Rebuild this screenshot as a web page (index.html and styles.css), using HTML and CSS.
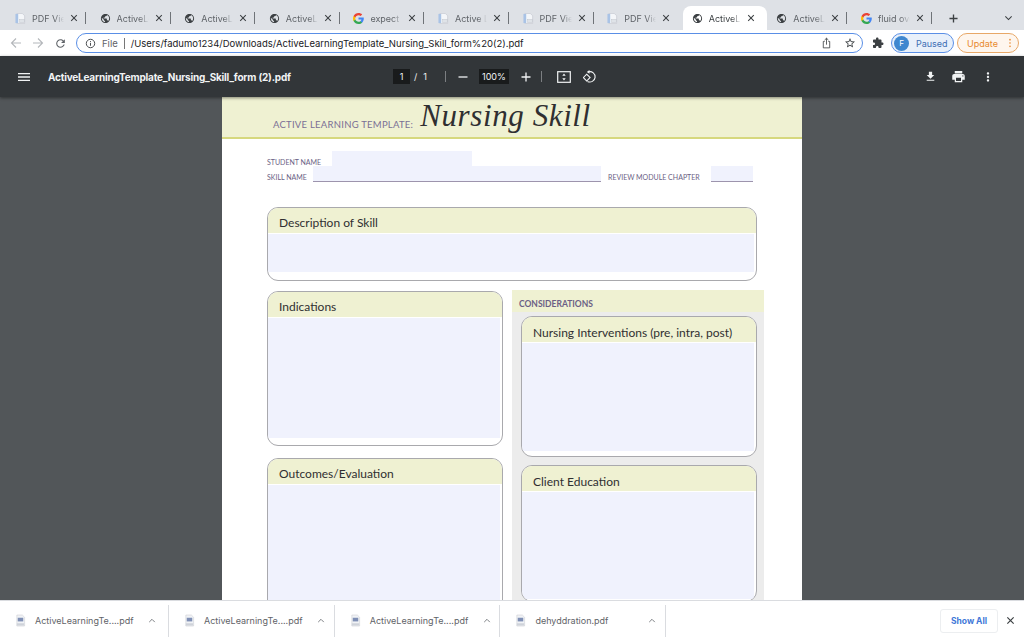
FILE: index.html
```html
<!DOCTYPE html>
<html lang="en">
<head>
<meta charset="utf-8">
<title>ActiveLearningTemplate_Nursing_Skill_form (2).pdf</title>
<link rel="stylesheet" href="styles.css">
</head>
<body>
<svg class="defs" aria-hidden="true">
  <symbol id="i-pdf" viewBox="0 0 12 12"><path d="M2 .5h6l2.500 2.500v8.500H2z" fill="#f4f6f9" stroke="#c3c7cf" stroke-width=".7"/><rect x=".5" y="1" width="3" height="10" fill="#a9c3e6"/><rect x="5" y="7" width="5" height="3.500" fill="#dfe3e8" stroke="#b6bac2" stroke-width=".4"/></symbol>
  <symbol id="i-globe" viewBox="0 0 24 24"><path fill="#3c4043" d="M12 2C6.480 2 2 6.480 2 12s4.480 10 10 10 10-4.480 10-10S17.520 2 12 2zm-1 17.930c-3.950-.490-7-3.850-7-7.930 0-.620.080-1.210.210-1.790L9 15v1c0 1.100.900 2 2 2v1.930zm6.900-2.540c-.260-.810-1-1.390-1.900-1.390h-1v-3c0-.550-.450-1-1-1H8v-2h2c.550 0 1-.450 1-1V7h2c1.100 0 2-.900 2-2v-.410c2.930 1.190 5 4.060 5 7.410 0 2.080-.800 3.970-2.100 5.390z"/></symbol>
  <symbol id="i-g" viewBox="0 0 18 18"><path fill="#4285F4" d="M17.640 9.200c0-.640-.060-1.250-.160-1.840H9v3.480h4.840a4.140 4.140 0 0 1-1.800 2.720v2.260h2.920c1.700-1.570 2.680-3.880 2.680-6.620z"/><path fill="#34A853" d="M9 18c2.430 0 4.470-.800 5.960-2.180l-2.920-2.260c-.800.540-1.830.860-3.040.860-2.340 0-4.320-1.580-5.030-3.700H.960v2.330A9 9 0 0 0 9 18z"/><path fill="#FBBC05" d="M3.970 10.720A5.400 5.400 0 0 1 3.680 9c0-.600.100-1.180.290-1.720V4.950H.960A9 9 0 0 0 0 9c0 1.450.350 2.830.960 4.050l3.010-2.330z"/><path fill="#EA4335" d="M9 3.580c1.320 0 2.500.450 3.440 1.350l2.580-2.580C13.460.890 11.430 0 9 0A9 9 0 0 0 .960 4.950l3.010 2.330C4.680 5.160 6.660 3.580 9 3.580z"/></symbol>
  <symbol id="i-x" viewBox="0 0 10 10"><path d="M1.500 1.500l7 7m0-7l-7 7" fill="none" stroke="#3c4043" stroke-width="1.300"/></symbol>
  <symbol id="i-file" viewBox="0 0 12 14"><path d="M2 1h6l2.500 2.500V13H2z" fill="#f1f3f6" stroke="#c9ccd2" stroke-width=".6"/><rect x="3" y="4" width="6" height="4" fill="#7f8fb5"/><rect x="2" y="10" width="8" height="2.500" fill="#cfd3da"/></symbol>
  <symbol id="i-up" viewBox="0 0 10 6"><path d="M1.500 5L5 1.500 8.500 5" fill="none" stroke="#5f6368" stroke-width="1"/></symbol>
</svg>

<header class="tabstrip">
  <div class="tab"><svg class="fav"><use href="#i-pdf"/></svg><span class="tab-title">PDF Viewer</span><svg class="tab-x"><use href="#i-x"/></svg><i class="tab-sep"></i></div>
  <div class="tab"><svg class="fav"><use href="#i-globe"/></svg><span class="tab-title">ActiveLearning</span><svg class="tab-x"><use href="#i-x"/></svg><i class="tab-sep"></i></div>
  <div class="tab"><svg class="fav"><use href="#i-globe"/></svg><span class="tab-title">ActiveLearning</span><svg class="tab-x"><use href="#i-x"/></svg><i class="tab-sep"></i></div>
  <div class="tab"><svg class="fav"><use href="#i-globe"/></svg><span class="tab-title">ActiveLearning</span><svg class="tab-x"><use href="#i-x"/></svg><i class="tab-sep"></i></div>
  <div class="tab"><svg class="fav"><use href="#i-g"/></svg><span class="tab-title">expect findings</span><svg class="tab-x"><use href="#i-x"/></svg><i class="tab-sep"></i></div>
  <div class="tab"><svg class="fav"><use href="#i-pdf"/></svg><span class="tab-title">Active Learning</span><svg class="tab-x"><use href="#i-x"/></svg><i class="tab-sep"></i></div>
  <div class="tab"><svg class="fav"><use href="#i-pdf"/></svg><span class="tab-title">PDF Viewer</span><svg class="tab-x"><use href="#i-x"/></svg><i class="tab-sep"></i></div>
  <div class="tab"><svg class="fav"><use href="#i-pdf"/></svg><span class="tab-title">PDF Viewer</span><svg class="tab-x"><use href="#i-x"/></svg></div>
  <div class="tab tab-active"><svg class="fav"><use href="#i-globe"/></svg><span class="tab-title">ActiveLearning</span><svg class="tab-x"><use href="#i-x"/></svg></div>
  <div class="tab"><svg class="fav"><use href="#i-globe"/></svg><span class="tab-title">ActiveLearning</span><svg class="tab-x"><use href="#i-x"/></svg><i class="tab-sep"></i></div>
  <div class="tab"><svg class="fav"><use href="#i-g"/></svg><span class="tab-title">fluid overload</span><svg class="tab-x"><use href="#i-x"/></svg><i class="tab-sep"></i></div>
  <svg class="newtab" viewBox="0 0 10 10"><path d="M5 .5v9M.5 5h9" stroke="#3c4043" stroke-width="1.500" fill="none"/></svg>
  <svg class="tabmenu" viewBox="0 0 10 6"><path d="M1.500 1.200L5 4.700l3.500-3.500" stroke="#3c4043" stroke-width="1.200" fill="none"/></svg>
</header>

<nav class="toolbar">
  <svg class="nav-btn nav-back" viewBox="0 0 12 12"><path d="M11 6H1.500M6 1.500L1.500 6 6 10.500" fill="none" stroke="#b4b7bb" stroke-width="1.100"/></svg>
  <svg class="nav-btn nav-fwd" viewBox="0 0 12 12"><path d="M1 6h9.500M6 1.500L10.500 6 6 10.500" fill="none" stroke="#b4b7bb" stroke-width="1.100"/></svg>
  <svg class="nav-btn nav-reload" viewBox="0 0 24 24"><path fill="#5f6368" d="M17.650 6.350C16.200 4.900 14.210 4 12 4c-4.420 0-7.990 3.580-7.990 8s3.570 8 7.990 8c3.730 0 6.840-2.550 7.730-6h-2.080c-.820 2.330-3.040 4-5.650 4-3.310 0-6-2.690-6-6s2.690-6 6-6c1.660 0 3.140.690 4.220 1.780L13 11h7V4l-2.350 2.350z"/></svg>
  <div class="omnibox">
    <svg class="omni-info" viewBox="0 0 12 12"><circle cx="6" cy="6" r="4.600" fill="none" stroke="#3c4043" stroke-width="1"/><path d="M6 5.300v3.200M6 3.400v1" stroke="#3c4043" stroke-width="1"/></svg>
    <span class="omni-file">File</span>
    <i class="omni-sep"></i>
    <span class="omni-url">/Users/fadumo1234/Downloads/ActiveLearningTemplate_Nursing_Skill_form%20(2).pdf</span>
    <svg class="omni-share" viewBox="0 0 12 12"><path d="M4 4.300H2.500v7h7v-7H8M6 7.800V.8M3.900 2.800L6 .8l2.100 2" fill="none" stroke="#3c4043" stroke-width=".9"/></svg>
    <svg class="omni-star" viewBox="0 0 24 24"><path fill="#3c4043" d="M22 9.240l-7.190-.620L12 2 9.190 8.630 2 9.240l5.460 4.730L5.820 21 12 17.270 18.180 21l-1.630-7.030L22 9.240zM12 15.400l-3.760 2.270 1-4.280-3.320-2.880 4.380-.380L12 6.100l1.710 4.040 4.380.380-3.320 2.880 1 4.280L12 15.400z"/></svg>
  </div>
  <svg class="ext" viewBox="0 0 24 24"><path fill="#3c4043" d="M20.500 11H19V7c0-1.100-.900-2-2-2h-4V3.500C13 2.120 11.880 1 10.500 1S8 2.120 8 3.500V5H4c-1.100 0-1.990.900-1.990 2v3.800H3.500c1.490 0 2.700 1.210 2.700 2.700s-1.210 2.700-2.700 2.700H2V20c0 1.100.900 2 2 2h3.800v-1.500c0-1.490 1.210-2.700 2.700-2.700 1.490 0 2.700 1.210 2.700 2.700V22H17c1.100 0 2-.900 2-2v-4h1.500c1.380 0 2.500-1.120 2.500-2.500S21.880 11 20.500 11z"/></svg>
  <div class="profile"><span class="avatar">F</span><span>Paused</span></div>
  <div class="update"><span>Update</span><svg class="update-dots" viewBox="0 0 4 12"><circle cx="2" cy="2" r="1" fill="#e8892f"/><circle cx="2" cy="6" r="1" fill="#e8892f"/><circle cx="2" cy="10" r="1" fill="#e8892f"/></svg></div>
</nav>

<section class="pdfbar">
  <svg class="pdf-menu" viewBox="0 0 24 24"><path fill="#f1f3f4" d="M3 18h18v-2H3v2zm0-5h18v-2H3v2zm0-7v2h18V6H3z"/></svg>
  <span class="pdf-title">ActiveLearningTemplate_Nursing_Skill_form (2).pdf</span>
  <span class="pdf-box pdf-page">1</span>
  <span class="pdf-count">/</span>
  <span class="pdf-total">1</span>
  <i class="pdf-sep pdf-sep1"></i>
  <svg class="pdf-minus" viewBox="0 0 10 10"><path d="M.500 5h9" stroke="#f1f3f4" stroke-width="1.300"/></svg>
  <span class="pdf-box pdf-zoom">100%</span>
  <svg class="pdf-plus" viewBox="0 0 10 10"><path d="M.500 5h9M5 .5v9" stroke="#f1f3f4" stroke-width="1.300"/></svg>
  <i class="pdf-sep pdf-sep2"></i>
  <svg class="pdf-fit" viewBox="0 0 14 12"><rect x=".7" y=".7" width="12.600" height="10.600" fill="none" stroke="#f1f3f4" stroke-width="1.200"/><path d="M7 2.500L5.300 4.700h3.400zM7 9.500L5.300 7.300h3.400z" fill="#f1f3f4"/></svg>
  <svg class="pdf-rotate" viewBox="0 0 14 14"><path d="M5.500 1.800a5.200 5.200 0 1 1-1 9.600" fill="none" stroke="#f1f3f4" stroke-width="1.100"/><path d="M6.500 0v3.800L3.800 1.900z" fill="#f1f3f4"/><rect x="1.300" y="5.200" width="4.800" height="4.800" transform="rotate(45 3.700 7.600)" fill="none" stroke="#f1f3f4" stroke-width="1.100"/></svg>
  <svg class="pdf-download" viewBox="0 0 24 24"><path fill="#f1f3f4" d="M19 9h-4V3H9v6H5l7 7 7-7zM5 18v2h14v-2H5z"/></svg>
  <svg class="pdf-print" viewBox="0 0 24 24"><path fill="#f1f3f4" d="M19 8H5c-1.660 0-3 1.340-3 3v6h4v4h12v-4h4v-6c0-1.660-1.340-3-3-3zm-3 11H8v-5h8v5zm3-7c-.550 0-1-.450-1-1s.450-1 1-1 1 .450 1 1-.450 1-1 1zm-1-9H6v4h12V3z"/></svg>
  <svg class="pdf-more" viewBox="0 0 24 24"><path fill="#f1f3f4" d="M12 8c1.100 0 2-.900 2-2s-.900-2-2-2-2 .900-2 2 .900 2 2 2zm0 2c-1.100 0-2 .900-2 2s.900 2 2 2 2-.900 2-2-.900-2-2-2zm0 6c-1.100 0-2 .900-2 2s.900 2 2 2 2-.900 2-2-.900-2-2-2z"/></svg>
</section>

<main class="viewer">
  <article class="page">
    <div class="page-head">
      <span class="page-kicker">ACTIVE LEARNING TEMPLATE:</span>
      <span class="page-heading">Nursing Skill</span>
    </div>
    <div class="page-body">
      <div class="row row-student">
        <span class="label label-student">STUDENT NAME</span>
        <span class="field field-student"></span>
      </div>
      <div class="row row-skill">
        <span class="label label-skill">SKILL NAME</span>
        <span class="field field-skill"></span>
        <span class="label label-review">REVIEW MODULE CHAPTER</span>
        <span class="field field-chapter"></span>
      </div>
      <div class="card card-desc">
        <h2 class="card-head">Description of Skill</h2>
        <div class="card-fill"></div>
      </div>
      <div class="columns">
        <div class="col-left">
          <div class="card card-ind">
            <h2 class="card-head">Indications</h2>
            <div class="card-fill"></div>
          </div>
          <div class="card card-out">
            <h2 class="card-head">Outcomes/Evaluation</h2>
            <div class="card-fill"></div>
          </div>
        </div>
        <div class="panel">
          <h3 class="panel-head">CONSIDERATIONS</h3>
          <div class="panel-body">
            <div class="card card-nurse">
              <h2 class="card-head card-head-r">Nursing Interventions (pre, intra, post)</h2>
              <div class="card-fill"></div>
            </div>
            <div class="card card-client">
              <h2 class="card-head card-head-r">Client Education</h2>
              <div class="card-fill"></div>
            </div>
          </div>
        </div>
      </div>
    </div>
  </article>
</main>

<footer class="downloads">
  <div class="dl"><svg class="dl-icon"><use href="#i-file"/></svg><span class="dl-name">ActiveLearningTe....pdf</span><svg class="dl-up"><use href="#i-up"/></svg></div>
  <div class="dl"><svg class="dl-icon"><use href="#i-file"/></svg><span class="dl-name">ActiveLearningTe....pdf</span><svg class="dl-up"><use href="#i-up"/></svg></div>
  <div class="dl"><svg class="dl-icon"><use href="#i-file"/></svg><span class="dl-name">ActiveLearningTe....pdf</span><svg class="dl-up"><use href="#i-up"/></svg></div>
  <div class="dl"><svg class="dl-icon"><use href="#i-file"/></svg><span class="dl-name">dehyddration.pdf</span><svg class="dl-up"><use href="#i-up"/></svg></div>
  <span class="showall">Show All</span>
  <svg class="dl-close"><use href="#i-x"/></svg>
</footer>
</body>
</html>
```
FILE: styles.css
```css
* { box-sizing: border-box; }
html, body { margin: 0; height: 100%; overflow: hidden; }
body {
  width: 1024px; height: 640px; display: flex; flex-direction: column;
  font-family: "Liberation Sans", Arial, sans-serif; background: #525659;
}
.defs { width: 0; height: 0; position: absolute; }

/* tab strip */
.tabstrip { flex: 0 0 30px; height: 30px; background: #dee1e6; display: flex; align-items: flex-end; padding-left: 6px; }
.tab { flex: 0 0 84.6px; width: 84.6px; height: 24px; display: flex; align-items: center; padding-left: 9px; }
.tab-active { background: #fff; border-radius: 8px 8px 0 0; }
.fav { width: 11px; height: 11px; flex: none; }
.tab-title {
  width: 32px; margin-left: 6px; font: 9px "Inter", "Liberation Sans", sans-serif; color: #5f6368; white-space: nowrap; overflow: hidden;
  -webkit-mask-image: linear-gradient(90deg, #000 70%, transparent);
  mask-image: linear-gradient(90deg, #000 70%, transparent);
}
.tab-active .tab-title { color: #3c4043; }
.tab-x { width: 8px; height: 8px; margin-left: 6px; flex: none; }
.tab-sep { width: 1px; height: 12px; background: #6f7378; margin-left: 7px; flex: none; }
.newtab { width: 9px; height: 9px; margin: 0 0 7px 12px; }
.tabmenu { width: 9px; height: 6px; margin: 0 0 9px 46px; }

/* address row */
.toolbar { flex: 0 0 26px; height: 26px; background: #fff; display: flex; align-items: center; }
.nav-btn { flex: none; }
.nav-back { width: 12px; height: 12px; margin-left: 10px; }
.nav-fwd { width: 12px; height: 12px; margin-left: 10px; }
.nav-reload { width: 13px; height: 13px; margin-left: 10px; }
.omnibox {
  width: 787px; height: 20px; margin-left: 9px; border: 1.500px solid #5a8fe6; border-radius: 10px;
  display: flex; align-items: center; padding-left: 8px; background: #fff; flex: none;
}
.omni-info { width: 11px; height: 11px; flex: none; }
.omni-file { margin-left: 6px; font: 9.500px "Inter", "Liberation Sans", sans-serif; color: #5f6368; }
.omni-sep { width: 1px; height: 11px; background: #777; margin-left: 6px; }
.omni-url { margin-left: 6px; font: 9.500px "Inter", "Liberation Sans", sans-serif; color: #202124; white-space: nowrap; }
.omni-share { width: 11px; height: 12px; margin-left: auto; }
.omni-star { width: 12px; height: 12px; margin: 0 6px 0 12px; }
.ext { width: 12px; height: 12px; margin-left: 9px; flex: none; }
.profile {
  width: 63px; height: 20px; margin-left: 7px; border: 1px solid #5a8fe6; border-radius: 10px; background: #e8f0fa; flex: none;
  display: flex; align-items: center; padding-left: 2px; gap: 7px; font: 9px "Inter", "Liberation Sans", sans-serif; color: #3c6fb4;
}
.avatar { width: 15px; height: 15px; border-radius: 50%; background: #3f87cf; color: #fff; font-size: 8px; display: flex; align-items: center; justify-content: center; }
.update {
  width: 62px; height: 20px; margin-left: 3px; border: 1px solid #e8a868; border-radius: 10px; background: #fef6ee; flex: none;
  display: flex; align-items: center; padding-left: 9px; font: 9px "Inter", "Liberation Sans", sans-serif; color: #e8892f;
}
.update-dots { width: 4px; height: 10px; margin-left: 10px; }

/* pdf toolbar */
.pdfbar { flex: 0 0 41px; height: 41px; background: #323639; display: flex; align-items: center; position: relative; box-shadow: 0 1px 3px rgba(0,0,0,.45); z-index: 1; color: #f1f3f4; }
.pdf-menu { width: 16px; height: 16px; margin-left: 16px; flex: none; }
.pdf-title { margin-left: 16px; width: 345px; flex: none; font: bold 10px "Inter", "Liberation Sans", sans-serif; letter-spacing: -.2px; white-space: nowrap; }
.pdf-box { background: #191b1c; height: 15px; display: flex; align-items: center; justify-content: center; font: 9px "Inter", "Liberation Sans", sans-serif; flex: none; }
.pdf-page { width: 17px; }
.pdf-count { margin-left: 4px; font: 9px "Inter", "Liberation Sans", sans-serif; }
.pdf-total { margin-left: 6px; font: 9px "Inter", "Liberation Sans", sans-serif; }
.pdf-sep { width: 1px; height: 11px; background: #7c7f82; flex: none; }
.pdf-sep1 { margin-left: 18px; }
.pdf-minus { width: 10px; height: 10px; margin-left: 12px; flex: none; }
.pdf-zoom { width: 30px; margin-left: 11px; }
.pdf-plus { width: 10px; height: 10px; margin-left: 12px; flex: none; }
.pdf-sep2 { margin-left: 10px; }
.pdf-fit { width: 14px; height: 12px; margin-left: 15px; flex: none; }
.pdf-rotate { width: 14px; height: 14px; margin-left: 12px; flex: none; }
.pdf-download { width: 13px; height: 13px; margin-left: 327px; flex: none; }
.pdf-print { width: 15px; height: 15px; margin-left: 14px; flex: none; }
.pdf-more { width: 14px; height: 14px; margin-left: 15px; flex: none; }

/* viewer */
.viewer { flex: 1 1 auto; min-height: 0; overflow: hidden; background: #525659; }
.page { width: 580px; margin: 0 auto; background: #fff; height: 100%; overflow: hidden; }
.page-head { height: 42px; background: #eff1d2; border-bottom: 2px solid #d6d87e; display: flex; align-items: flex-end; padding: 0 0 3px 51px; }
.page-kicker { font: 9.500px "Lato", "Liberation Sans", sans-serif; color: #7a6f95; letter-spacing: .25px; margin-bottom: 4px; }
.page-heading { margin-left: 7px; font: italic 31px/36px "Liberation Serif", serif; color: #2f2f31; letter-spacing: .6px; }
.page-body { padding: 12px 0 0 45px; }

.row { display: flex; height: 16px; }
.row-skill { margin-top: -1px; }
.label { font: 7px/22px "Lato", "Liberation Sans", sans-serif; color: #6b5f85; white-space: nowrap; flex: none; }
.label-student { width: 65px; }
.label-skill { width: 46px; }
.label-review { width: 103px; margin-left: 7px; }
.field { background: #f0f2fd; border-bottom: 1px solid #9d94ad; flex: none; }
.field-student { width: 140px; border-bottom-color: #dcdcec; }
.field-skill { width: 288px; }
.field-chapter { width: 42px; }

/* cards */
.card { border: 1px solid #a9a9ad; border-radius: 11px; overflow: hidden; background: #fff; }
.card-head { margin: 0; height: 25px; padding: 7px 0 0 11px; background: #eff1d2; font: 12px/16px "Lato", "Liberation Sans", sans-serif; color: #2f2f31; font-weight: 400; }
.card-head-r { padding-top: 8px; padding-left: 11px; }
.card-fill { margin: 1px 2px 0 0; background: #f0f2fd; }
.card-desc { width: 490px; height: 74px; margin-top: 25px; }
.card-desc .card-fill { height: 38px; }
.columns { display: grid; grid-template-columns: 236px 252px; column-gap: 9px; margin-top: 9px; }
.col-left { padding-top: 1px; display: flex; flex-direction: column; gap: 12px; }
.card-ind { height: 155px; }
.card-ind .card-fill { height: 120px; }
.card-out { height: 180px; }
.card-out .card-fill { height: 140px; }
.panel { background: #ececec; height: 320px; }
.panel-head { margin: 0; height: 22px; padding-left: 7px; background: #eff1d2; font: bold 8.500px/28px "Lato", "Liberation Sans", sans-serif; color: #6b5f85; }
.panel-body { padding: 4px 7px 0 9px; display: flex; flex-direction: column; gap: 8px; }
.card-nurse { height: 141px; }
.card-nurse .card-fill { height: 108px; }
.card-client { height: 137px; }
.card-client .card-fill { height: 107px; }

/* download bar */
.downloads { flex: 0 0 40px; height: 40px; background: #fff; border-top: 1px solid #dadce0; display: flex; align-items: center; }
.dl { width: 165.700px; height: 32px; flex: none; border-right: 1px solid #dadce0; display: flex; align-items: center; padding-left: 15px; }
.dl:first-child { width: 169px; }
.dl-icon { width: 11px; height: 13px; flex: none; }
.dl-name { width: 110px; margin-left: 9px; font: 9px "Inter", "Liberation Sans", sans-serif; color: #5f6368; white-space: nowrap; flex: none; }
.dl-up { width: 8px; height: 5px; margin-left: 3px; flex: none; }
.showall { margin-left: auto; width: 58px; height: 24px; border: 1px solid #eceef0; border-radius: 3px; display: flex; align-items: center; justify-content: center; font: bold 8.500px "Inter", "Liberation Sans", sans-serif; color: #3f78d8; flex: none; }
.dl-close { width: 9px; height: 9px; margin: 0 9px 0 8px; flex: none; }
```
